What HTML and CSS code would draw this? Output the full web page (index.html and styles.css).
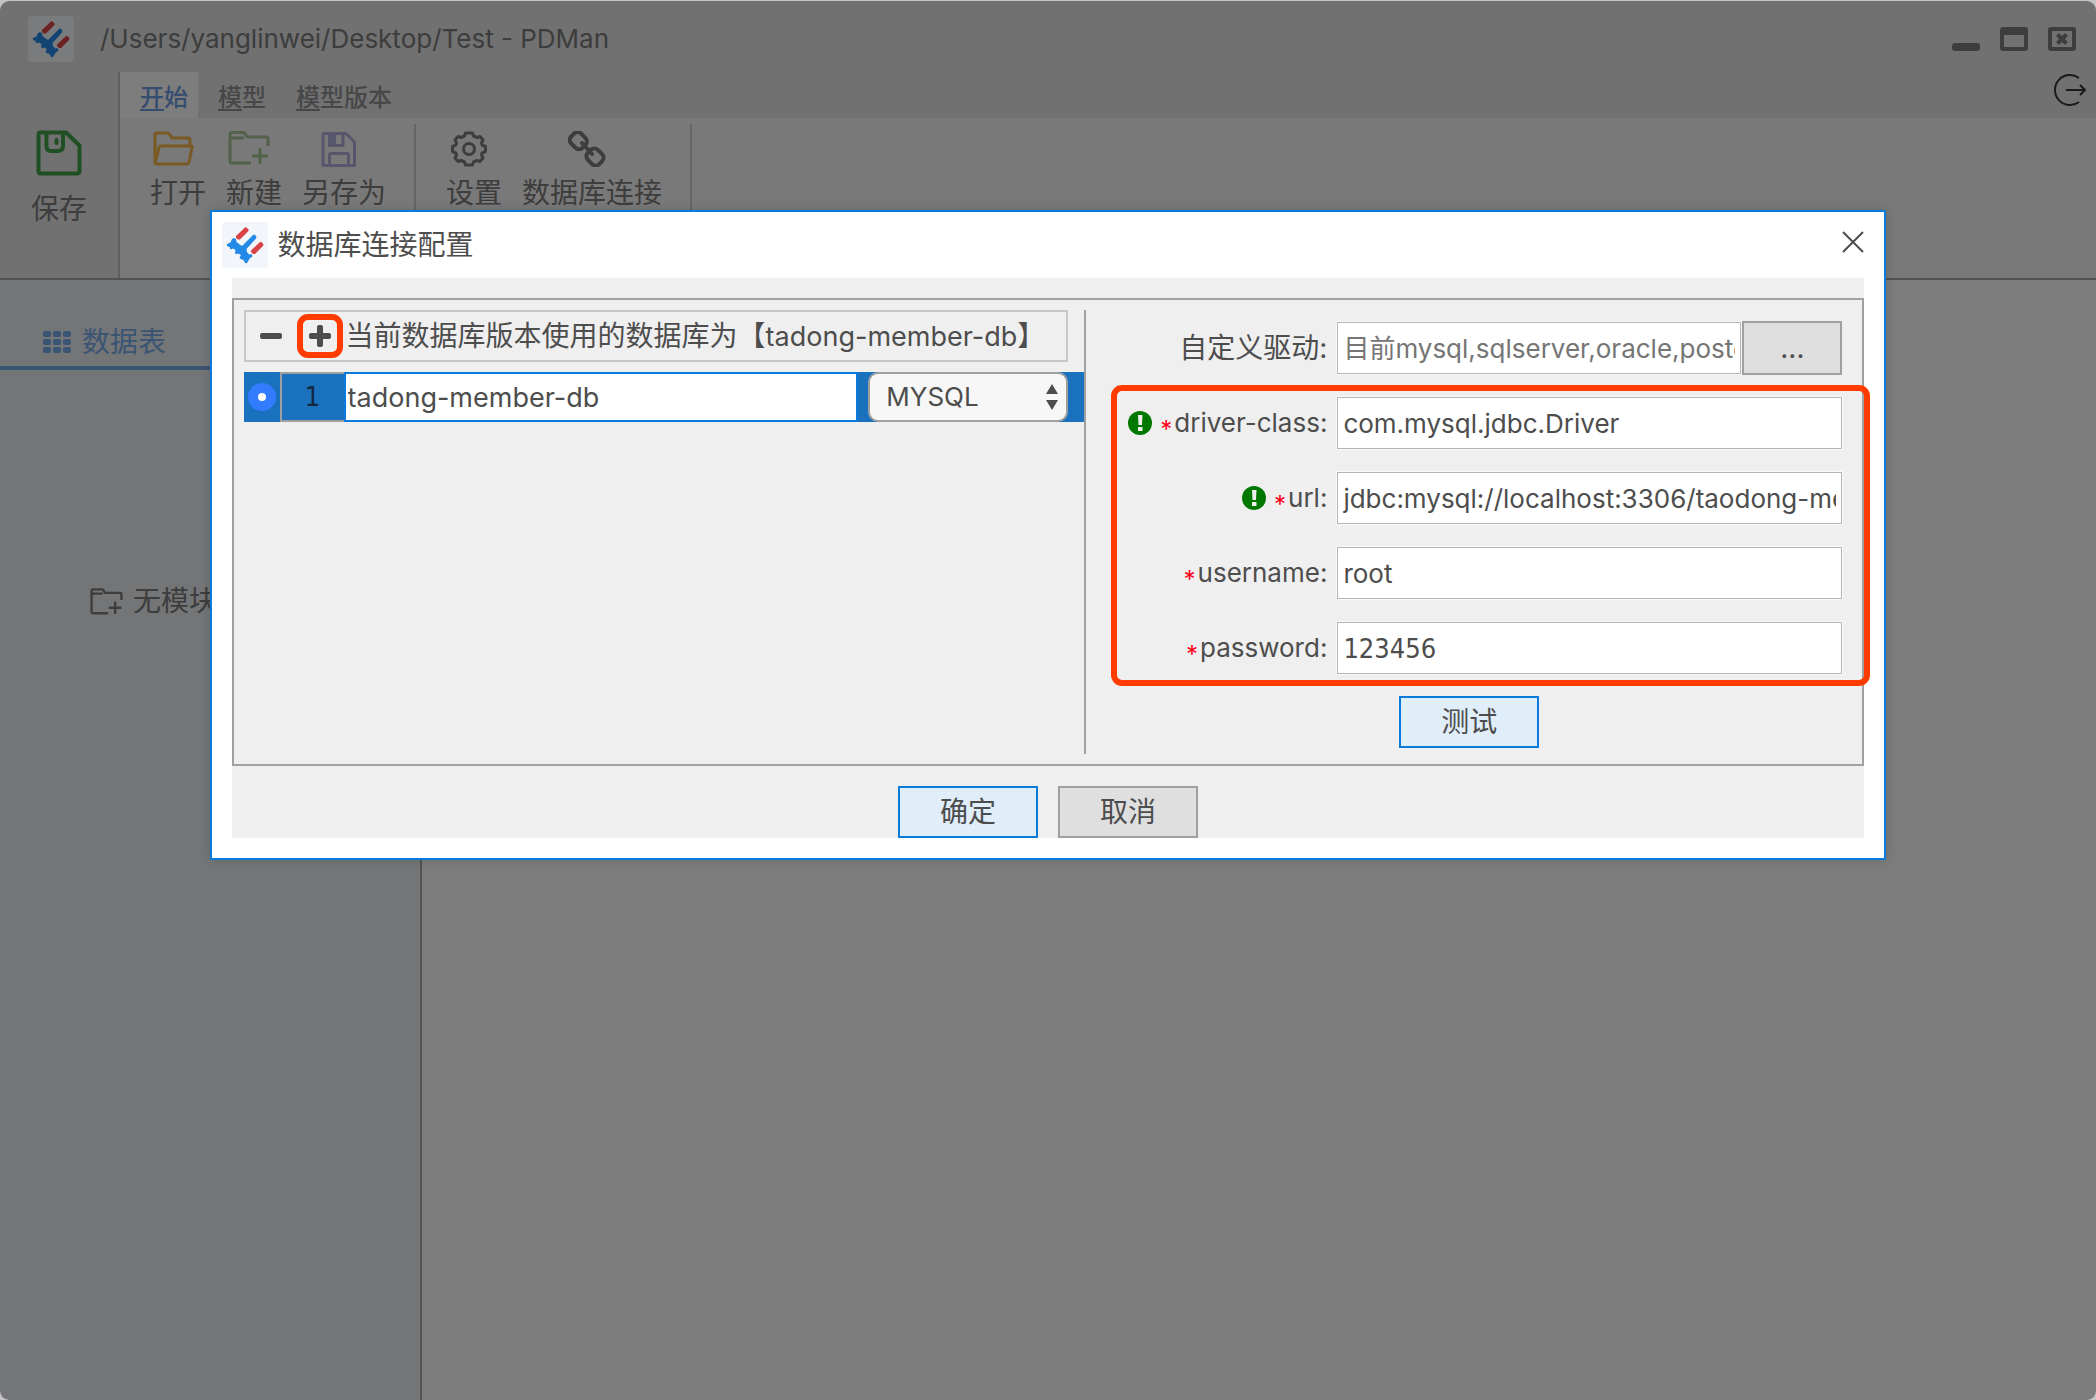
FILE: index.html
```html
<!DOCTYPE html>
<html lang="zh-CN">
<head>
    <meta charset="UTF-8">
    <meta name="viewport" content="width=device-width, initial-scale=1.0">
    <title>PDMan</title>
    <link rel="stylesheet" href="styles.css">
</head>
<body>
<svg class="defs" width="0" height="0" aria-hidden="true">
    <symbol id="logo" viewBox="0 0 46 46">
        <rect width="46" height="46" rx="4" fill="#f2f6fa"/>
        <path fill="#d94345" d="M14 14L23 5.500Q24 5 25 6L26.500 7.500Q27 8.500 26 9.500L18 17.500L16 17.500L14 16ZM29 28.500L38 20Q39 19.500 40 20.500L41.500 22.500L41 24L33 32L31 32L29 30Z"/>
        <path fill="#2389e6" d="M20 24L31 13Q32 12 33 13L34.500 14.500L34 16.500L24.500 27L25 30L27 32.500L29 32Q31 33 30 35L28 36L26.500 38.500L25 41Q23.500 42 22.500 40L21.500 38L18.500 37L17.500 35.500L19 33L16 31.500L14 32.500L13 30.500L13.500 28L11 26.500L8.500 27.500L7.500 25L5 24L5 22L8.500 20.500L10 17L12 16L14 17L14.500 20L17 22Z"/>
    </symbol>
    <symbol id="folder-add" viewBox="0 0 42 34">
        <path d="M40 15V8Q40 6 38 6H19L17 2.500Q16.500 1.500 15 1.500H4Q2 1.500 2 3.500V30Q2 32 4 32H23M2 7H16M32 17V33M24 25H40" fill="none" stroke="currentColor" stroke-width="3" stroke-linejoin="round"/>
    </symbol>
</svg>

<div class="window">
    <header class="titlebar">
        <svg class="logo"><use href="#logo"/></svg>
        <h1 class="title">/Users/yanglinwei/Desktop/Test - PDMan</h1>
        <div class="controls">
            <button type="button" aria-label="最小化"><svg width="28" height="24"><rect y="16" width="28" height="8" rx="3" fill="currentColor"/></svg></button>
            <button type="button" aria-label="最大化"><svg width="28" height="24"><path d="M3 0H25Q28 0 28 3V21Q28 24 25 24H3Q0 24 0 21V3Q0 0 3 0ZM4 8V20H24V8Z" fill="currentColor" fill-rule="evenodd"/></svg></button>
            <button type="button" aria-label="关闭"><svg width="28" height="24"><path d="M3 0H25Q28 0 28 3V21Q28 24 25 24H3Q0 24 0 21V3Q0 0 3 0ZM4 4V20H24V4Z" fill="currentColor" fill-rule="evenodd"/><path d="M9.500 7.500L18.500 16.500M18.500 7.500L9.500 16.500" stroke="currentColor" stroke-width="4"/></svg></button>
        </div>
    </header>

    <div class="toolbar">
        <button type="button" class="save">
            <svg width="46" height="46" fill="none" stroke="#3e9e46" stroke-width="4" stroke-linejoin="round"><path d="M4 2.500H30L43.500 15.500V41Q43.500 43.500 41 43.500H5Q2.500 43.500 2.500 41V5Q2.500 2.500 4 2.500ZM10.500 3V16Q10.500 21 15 21H22Q27 21 27 16V3"/><path d="M20.500 10V13" stroke-linecap="round"/></svg>
            <span>保存</span>
        </button>
        <div class="menu">
            <nav class="tabs">
                <a href="#" class="tab active"><u>开</u>始</a>
                <a href="#" class="tab"><u>模</u>型</a>
                <a href="#" class="tab"><u>模</u>型版本</a>
                <button type="button" class="exit" aria-label="退出">
                    <svg width="34" height="34" fill="none" stroke="currentColor" stroke-width="2"><path d="M26 5A15 15 0 1 0 26 29M13 17H32M27 12L32 17L27 22"/></svg>
                </button>
            </nav>
            <div class="ribbon">
                <div class="group">
                    <button type="button" class="tool">
                        <svg width="42" height="36" fill="none" stroke="#f0b445" stroke-width="3" stroke-linejoin="round"><path d="M3 32V4Q3 2 5 2H15Q17 2 18 4L20 7H36Q38 7 38 9V14M3 32L7 17Q7.500 15 9 15H39Q41 15 40 17L37 31Q36.500 33 35 33H5Q3 33 3 31"/></svg>
                        <span>打开</span>
                    </button>
                    <button type="button" class="tool">
                        <svg class="new-icon" width="42" height="36"><use href="#folder-add" width="42" height="34"/></svg>
                        <span>新建</span>
                    </button>
                    <button type="button" class="tool">
                        <svg width="36" height="36" fill="none" stroke="#b0acda" stroke-width="3" stroke-linejoin="round"><path d="M3 2.500H25L33.500 11V34.500H3Q2 34.500 2 33.500V4Q2 2.500 3 2.500ZM8.500 34V24Q8.500 22.500 10 22.500H26Q27.500 22.500 27.500 24V34M8.500 3V14.500H22V3"/><path fill="#b0acda" stroke="none" d="M8 3H15V15H8Z"/></svg>
                        <span>另存为</span>
                    </button>
                </div>
                <div class="group">
                    <button type="button" class="tool">
                        <svg width="36" height="36" viewBox="0 0 36 36" fill="none" stroke="currentColor" stroke-width="3" stroke-linejoin="round"><path d="M14.500 2H21.500L22.500 5L26 6.500L29 5.500L32 9L30.500 12L31 14L34.500 15.500V20.500L31 22L30.500 24L32 27L29 30.500L26 29.500L22.500 31L21.500 34H14.500L13.500 31L10 29.500L7 30.500L4 27L5.500 24L5 22L1.500 20.500V15.500L5 14L5.500 12L4 9L7 5.500L10 6.500L13.500 5Z"/><circle cx="18" cy="18" r="5.500"/></svg>
                        <span>设置</span>
                    </button>
                    <button type="button" class="tool">
                        <svg width="38" height="36" viewBox="0 0 38 36" fill="none" stroke="currentColor" stroke-width="4"><rect x="-8" y="-6" width="16" height="14" rx="5" transform="translate(11 9) rotate(45)"/><rect x="-8" y="-7" width="16" height="14" rx="5" transform="translate(27 26) rotate(45)"/><path d="M14 12L24 23" stroke-linecap="round"/></svg>
                        <span>数据库连接</span>
                    </button>
                </div>
            </div>
        </div>
    </div>

    <div class="workspace">
        <aside class="sidebar">
            <a href="#" class="side-tab">
                <svg width="29" height="22" fill="currentColor"><path d="M2 0H6Q8 0 8 2V4Q8 6 6 6H2Q0 6 0 4V2Q0 0 2 0ZM12 0H16Q18 0 18 2V4Q18 6 16 6H12Q10 6 10 4V2Q10 0 12 0ZM22 0H26Q28 0 28 2V4Q28 6 26 6H22Q20 6 20 4V2Q20 0 22 0ZM2 8H6Q8 8 8 10V12Q8 14 6 14H2Q0 14 0 12V10Q0 8 2 8ZM12 8H16Q18 8 18 10V12Q18 14 16 14H12Q10 14 10 12V10Q10 8 12 8ZM22 8H26Q28 8 28 10V12Q28 14 26 14H22Q20 14 20 12V10Q20 8 22 8ZM2 16H6Q8 16 8 18V20Q8 22 6 22H2Q0 22 0 20V18Q0 16 2 16ZM12 16H16Q18 16 18 18V20Q18 22 16 22H12Q10 22 10 20V18Q10 16 12 16ZM22 16H26Q28 16 28 18V20Q28 22 26 22H22Q20 22 20 20V18Q20 16 22 16Z"/></svg>
                <span>数据表</span>
            </a>
            <p class="empty"><svg width="33" height="27"><use href="#folder-add" width="33" height="27"/></svg><span>无模块</span></p>
        </aside>
        <main class="content"></main>
    </div>

    <div class="mask">
        <section class="dialog" role="dialog" aria-labelledby="dialog-title">
            <header class="dialog-header">
                <svg class="logo"><use href="#logo"/></svg>
                <h2 class="title" id="dialog-title">数据库连接配置</h2>
                <button type="button" class="dialog-close" aria-label="关闭"><svg width="22" height="22" stroke="currentColor" stroke-width="2"><path d="M1 1L21 21M21 1L1 21"/></svg></button>
            </header>
            <div class="dialog-body">
                <div class="panel">
                    <div class="connections">
                        <div class="db-bar">
                            <button type="button" aria-label="删除"><svg width="22" height="22"><rect y="8" width="22" height="6" rx="2" fill="currentColor"/></svg></button>
                            <button type="button" class="add" aria-label="新增"><svg width="22" height="22" fill="currentColor"><rect y="8" width="22" height="6" rx="2"/><rect x="8" width="6" height="22" rx="2"/></svg></button>
                            <span>当前数据库版本使用的数据库为【<span class="current-db">tadong-member-db</span>】</span>
                        </div>
                        <table class="db-table">
                            <tr>
                                <td class="col-radio"><input type="radio" name="db" aria-label="使用此连接" checked></td>
                                <td class="col-index">1</td>
                                <td><input type="text" class="db-name" aria-label="连接名" value="tadong-member-db"></td>
                                <td class="col-type">
                                    <div class="select">
                                        <select aria-label="数据库类型"><option>MYSQL</option></select>
                                        <svg width="14" height="26" fill="currentColor"><path d="M7 0L13 10H1ZM7 26L1 16H13Z"/></svg>
                                    </div>
                                </td>
                            </tr>
                        </table>
                    </div>
                    <form class="settings">
                        <div class="field">
                            <label for="driver" class="label-cn">自定义驱动:</label>
                            <div class="control">
                                <input type="text" id="driver" placeholder="目前mysql,sqlserver,oracle,postgresql">
                                <button type="button" class="btn browse">...</button>
                            </div>
                        </div>
                        <div class="required">
                            <div class="field">
                                <label for="driver-class"><svg class="info" width="24" height="24"><circle cx="12" cy="12" r="12" fill="#007800"/><path d="M10 4H14.500L14 14H10.500ZM10 16H14.500V20H10Z" fill="#efefef"/></svg><i>*</i>driver-class:</label>
                                <div class="control"><input type="text" id="driver-class" value="com.mysql.jdbc.Driver"></div>
                            </div>
                            <div class="field">
                                <label for="url"><svg class="info" width="24" height="24"><circle cx="12" cy="12" r="12" fill="#007800"/><path d="M10 4H14.500L14 14H10.500ZM10 16H14.500V20H10Z" fill="#efefef"/></svg><i>*</i>url:</label>
                                <div class="control"><input type="text" id="url" value="jdbc:mysql://localhost:3306/taodong-member-db"></div>
                            </div>
                            <div class="field">
                                <label for="username"><i>*</i>username:</label>
                                <div class="control"><input type="text" id="username" value="root"></div>
                            </div>
                            <div class="field">
                                <label for="password"><i>*</i>password:</label>
                                <div class="control"><input type="text" id="password" class="digits" value="123456"></div>
                            </div>
                        </div>
                        <button type="button" class="btn primary">测试</button>
                    </form>
                </div>
                <footer class="actions">
                    <button type="button" class="btn primary">确定</button>
                    <button type="button" class="btn">取消</button>
                </footer>
            </div>
        </section>
    </div>
</div>
</body>
</html>
```

FILE: styles.css
```css
* {
    box-sizing: border-box;
}

body {
    margin: 0;
    padding-top: 1px;
    background-color: #c4c4c6;
    font-family: Inter, "Noto Sans CJK SC", sans-serif;
    font-size: 26px;
    line-height: 36px;
    color: #4d4d4d;
}

button, input, select {
    font: inherit;
    color: inherit;
}

button {
    padding: 0;
    border: 0;
    background: none;
    cursor: pointer;
}

a {
    color: inherit;
    text-decoration: none;
}

svg {
    display: block;
    flex: none;
}

.defs {
    position: absolute;
}

.window {
    position: relative;
    display: flex;
    flex-direction: column;
    min-height: calc(100vh - 1px);
    border-radius: 9px;
    overflow: hidden;
    background-color: #f8f8f8;
    color: #7a7a7a;
}

.logo {
    width: 46px;
    height: 46px;
}

.title {
    margin: 0;
    font-size: 26px;
    font-weight: 400;
}

/* title bar */
.titlebar {
    display: flex;
    align-items: center;
    height: 71px;
    padding: 4px 20px 0 28px;
    background-color: #e2e2e2;
}

.titlebar .logo {
    margin-right: 26px;
}

.controls {
    display: flex;
    gap: 20px;
    margin-left: auto;
}

/* toolbar */
.toolbar {
    display: flex;
    height: 208px;
    background-color: #e2e2e2;
    border-bottom: 2px solid #a4a4a4;
}

.save {
    display: flex;
    flex-direction: column;
    align-items: center;
    gap: 15px;
    width: 120px;
    padding-top: 58px;
    border-right: 2px solid #c0c0c0;
    font-size: 28px;
}

.menu {
    flex: 1;
    display: flex;
    flex-direction: column;
}

.tabs {
    display: flex;
    height: 46px;
    font-size: 24px;
    font-weight: 500;
    color: #8e8e90;
}

.tab {
    height: 48px;
    padding: 8px 10px 0 20px;
}

.tab u {
    text-underline-offset: 3px;
}

.tab.active {
    background-color: #fafafa;
    color: #6a9ade;
}

.exit {
    margin-left: auto;
    padding: 0 9px 10px 0;
    color: #343434;
}

.ribbon {
    flex: 1;
    display: flex;
    padding-top: 6px;
    background-color: #f2f2f2;
}

.group {
    display: flex;
    align-items: flex-start;
    gap: 20px;
    padding: 7px 28px 0 30px;
    border-right: 2px solid #cacaca;
}

.tool {
    display: flex;
    flex-direction: column;
    align-items: center;
    gap: 8px;
    font-size: 28px;
}

.tool svg {
    margin-right: 10px;
}

.new-icon {
    color: #a4c49a;
}

/* workspace */
.workspace {
    flex: 1;
    display: flex;
}

.sidebar {
    width: 422px;
    background-color: #e7eaee;
    border-right: 2px solid #a8a8a8;
    font-size: 28px;
}

.side-tab {
    display: flex;
    align-items: center;
    gap: 10px;
    height: 90px;
    padding: 38px 0 0 43px;
    border-bottom: 4px solid #74a8e6;
    color: #74a8e6;
}

.empty {
    display: flex;
    align-items: center;
    gap: 10px;
    margin: 0;
    padding: 213px 0 0 90px;
}

.content {
    flex: 1;
}

/* dialog */
.mask {
    position: absolute;
    inset: 0;
    padding-top: 209px;
    background-color: rgba(0, 0, 0, 0.5);
}

.dialog {
    width: 80%;
    margin: 0 auto;
    padding: 0 20px 20px;
    border: 2px solid #0a7bdc;
    background-color: #fff;
    color: #4d4d4d;
    box-shadow: 0 0 10px rgba(0, 0, 0, 0.15);
}

.dialog-header {
    display: flex;
    align-items: center;
    gap: 10px;
    height: 66px;
    margin-left: -10px;
}

.dialog-header .title {
    font-size: 28px;
}

.dialog-close {
    margin-left: auto;
    padding-bottom: 6px;
}

.dialog-body {
    padding-top: 20px;
    background-color: #efefef;
}

.panel {
    display: grid;
    grid-template-columns: 11fr 10fr;
    min-height: 468px;
    padding: 10px;
    border: 2px solid #a0a0a0;
}

.connections {
    border-right: 2px solid #a0a0a0;
    min-width: 0;
}

.db-bar {
    display: flex;
    align-items: center;
    height: 52px;
    margin: 0 16px 10px 0;
    padding-left: 14px;
    border: 2px solid #c6c6c6;
    font-size: 28px;
    white-space: nowrap;
}

.db-bar .add {
    position: relative;
    margin: 0 15px 0 27px;
}

.current-db {
    font-size: 27px;
}

/* highlight around the add button */
.add::after {
    content: "";
    position: absolute;
    inset: -11px -12px;
    border: 6px solid #ff3b00;
    border-radius: 11px;
}

.db-table {
    width: 100%;
    table-layout: fixed;
    border-spacing: 0;
    background-color: #1a72bf;
}

.db-table td {
    height: 50px;
    padding: 0;
}

.db-table .col-radio {
    width: 36px;
}

.db-table .col-index {
    width: 64px;
    border: 2px solid #a0a0a0;
    border-right: 0;
    color: #12283c;
    text-align: center;
    font-family: "DejaVu Sans Condensed", "DejaVu Sans", sans-serif;
    font-size: 27px;
}

.db-table .col-type {
    width: 226px;
    padding: 0 16px 0 10px;
}

.col-radio input {
    appearance: none;
    display: block;
    width: 28px;
    height: 28px;
    margin: 0 auto;
    border: 10px solid #337bff;
    border-radius: 50%;
    background-color: #fff;
}

.db-name {
    display: block;
    width: 100%;
    height: 50px;
    padding: 0 2px;
    border: 2px solid #0a7bdc;
    border-radius: 0;
    background-color: #fff;
    font-size: 27px;
}

.select {
    position: relative;
}

.select select {
    appearance: none;
    display: block;
    width: 100%;
    height: 50px;
    padding: 0 16px;
    border: 2px solid #a0a0a0;
    border-radius: 10px;
    background-color: #f7f7f7;
}

.select svg {
    position: absolute;
    top: 12px;
    right: 9px;
    pointer-events: none;
}

.settings {
    display: flex;
    flex-direction: column;
    gap: 21px;
    min-width: 0;
    padding-top: 11px;
}

.field {
    display: flex;
    align-items: center;
    gap: 10px;
    height: 54px;
    padding-right: 10px;
}

.field label {
    flex: 1;
    display: flex;
    align-items: center;
    justify-content: flex-end;
    white-space: nowrap;
}

.field .label-cn {
    font-size: 28px;
}

.field i {
    margin: 14px 2px 0 8px;
    font-size: 24px;
    font-style: normal;
    color: #ff0018;
}

.control {
    display: flex;
    align-items: center;
    gap: 1px;
    width: 505px;
}

.control input {
    flex: 1;
    min-width: 0;
    height: 52px;
    padding: 0 5px;
    border: 1px solid #b5b5b5;
    box-shadow: 0 0 0 1px #fafafa;
    background-color: #fff;
}

.control .digits {
    font-family: "DejaVu Sans Condensed", "DejaVu Sans", sans-serif;
    font-size: 27px;
}

.control input::placeholder {
    color: #757575;
    opacity: 1;
}

/* highlight around the required fields */
.required {
    position: relative;
    display: flex;
    flex-direction: column;
    gap: 21px;
}

.required::after {
    content: "";
    position: absolute;
    inset: -11px -18px -11px 25px;
    border: 6px solid #ff3b00;
    border-radius: 11px;
    pointer-events: none;
}

.btn {
    width: 140px;
    height: 52px;
    border: 2px solid #a0a0a0;
    background-color: #dfdfdf;
    font-size: 28px;
}

.btn.primary {
    border-color: #0a7bdc;
    background-color: #e0eefa;
}

.btn.browse {
    width: 100px;
    height: 54px;
}

.settings > .btn {
    align-self: center;
}

.actions {
    display: flex;
    justify-content: center;
    gap: 20px;
    padding-top: 20px;
}
```
